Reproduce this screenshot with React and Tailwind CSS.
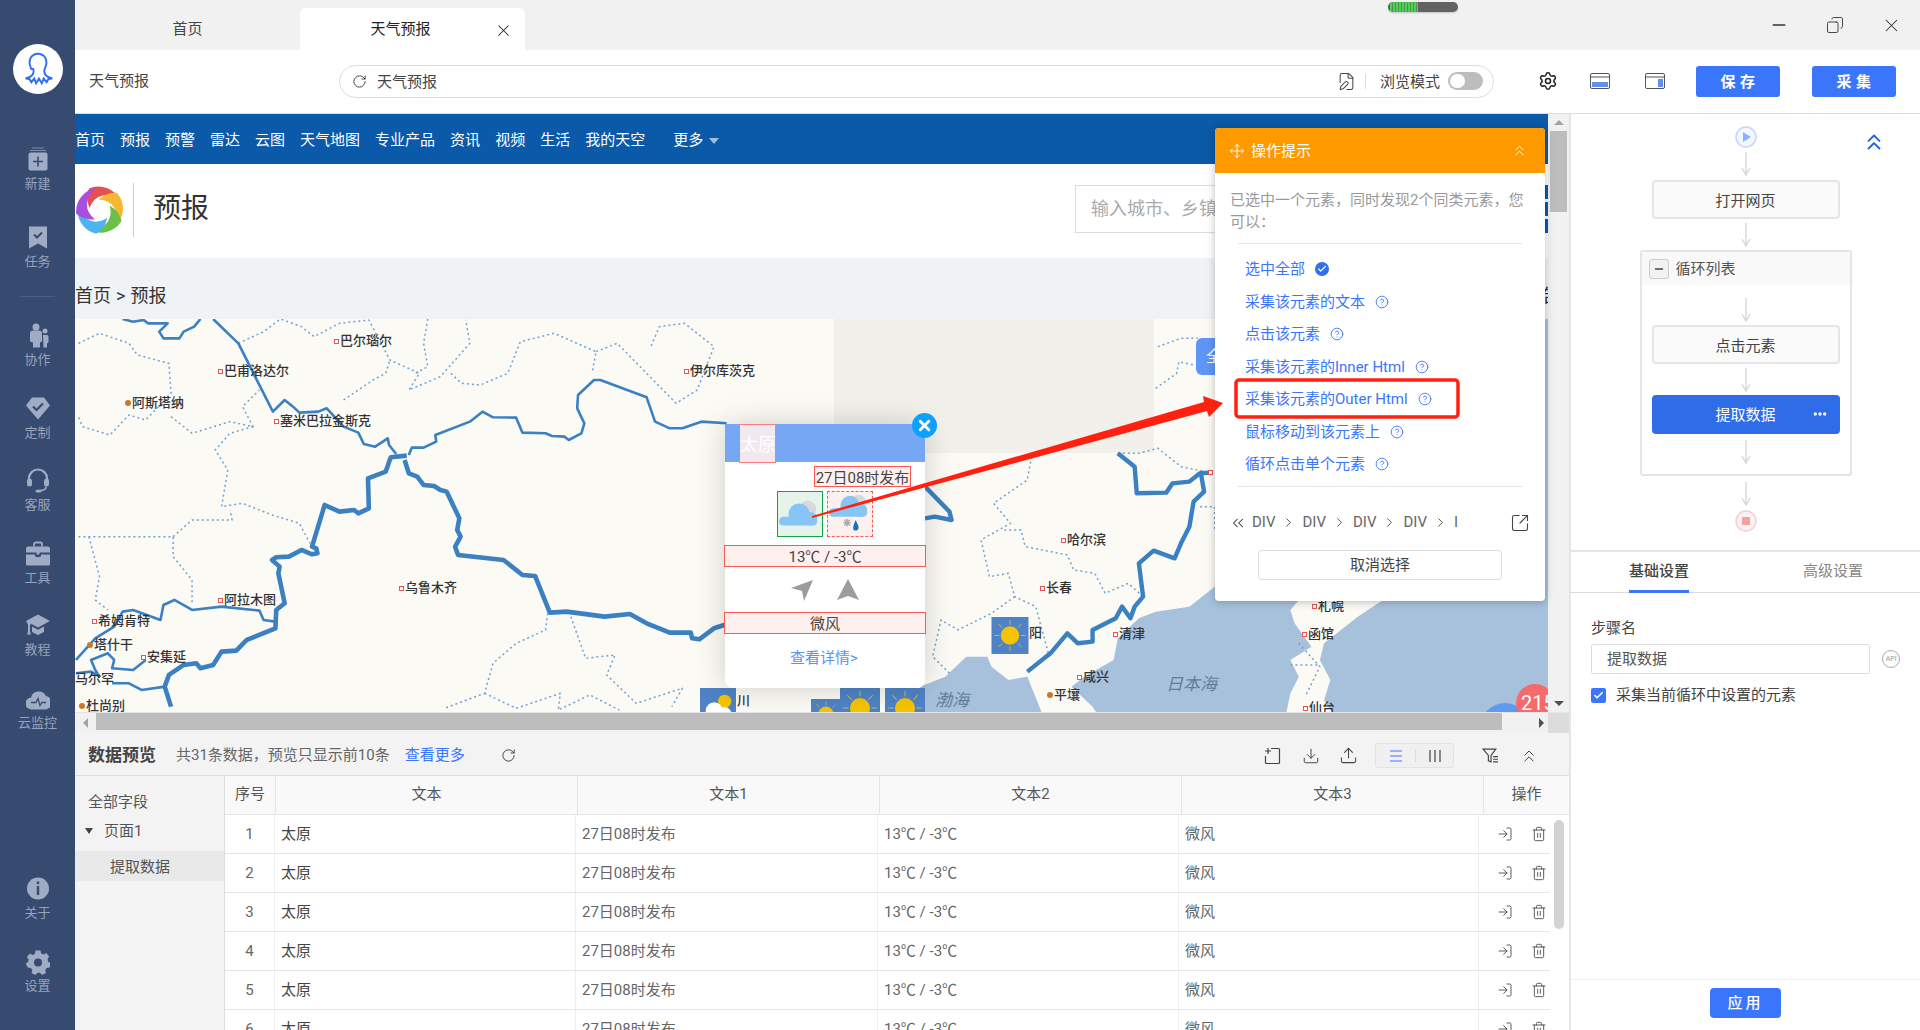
import {
  X, Minus, Copy, RotateCw, Settings, ChevronsUp, Move, Check, CircleHelp, SquareArrowOutUpRight,
  FilePen, Trash2, LogIn, Download, Upload, ChevronsLeft, ChevronRight, Ellipsis,
} from 'lucide-react'

const font = "font-['Roboto','Noto_Sans_CJK_SC',sans-serif]"

const navItems = ['首页', '预报', '预警', '雷达', '云图', '天气地图', '专业产品', '资讯', '视频', '生活', '我的天空']

const hints = [
  { text: '选中全部', checked: true },
  { text: '采集该元素的文本' },
  { text: '点击该元素' },
  { text: '采集该元素的Inner Html' },
  { text: '采集该元素的Outer Html' },
  { text: '鼠标移动到该元素上' },
  { text: '循环点击单个元素' },
]

// x / y are relative to the map, at the pin
const cities = [
  ['巴尔瑙尔', 262, 22, 'r'], ['巴甫洛达尔', 146, 52, 'r'], ['阿斯塔纳', 53, 84, 'o'],
  ['塞米巴拉金斯克', 202, 102, 'r'], ['伊尔库茨克', 612, 52, 'r'], ['乌鲁木齐', 327, 269, 'r'],
  ['阿拉木图', 146, 281, 'r'], ['希姆肯特', 20, 302, 'r'], ['塔什干', 15, 326, 'o'],
  ['安集延', 69, 338, 'r'], ['杜尚别', 7, 387, 'o'], ['哈尔滨', 989, 221, 'r'],
  ['长春', 968, 269, 'r'], ['清津', 1041, 315, 'r'], ['咸兴', 1005, 358, 'r'],
  ['平壤', 975, 376, 'o'], ['札幌', 1240, 287, 'r'], ['函馆', 1230, 315, 'r'], ['仙台', 1231, 389, 'r'],
]

const thickLines = [
  '240,1190 225,1130 235,1095 270,1065 300,1060 310,1075 340,1065 360,1025 395,1022 420,990 488,955 490,900 510,880 495,790 498,770 480,750 490,742 520,740 550,720 575,733 588,730 585,715 575,710 605,585 640,605 675,600 685,610 710,595 708,505 750,485 762,442 800,437',
  '795,450 805,490 825,500 840,525 865,528 880,540 895,545 925,625 920,660 928,680 915,710 922,735 1030,750 1075,795 1105,798 1140,908 1180,905 1270,920 1330,912 1370,940 1425,968 1475,968 1478,985 1495,988 1530,955 1568,940',
]
const thinLines = [
  '340,27 400,100 482,305 510,270 530,290 545,308 590,305 610,295 650,350 685,368 698,402 725,410 755,385 758,405 775,432',
  '805,435 812,413 840,413 870,395 868,375 950,335 980,305 1005,322 1060,323 1075,368 1130,370 1145,378 1175,380 1185,390 1215,370 1222,340 1205,295 1207,255 1245,210 1260,210 1370,262 1390,335 1425,355 1455,355 1500,335 1560,340',
  '125,27 150,35 175,30 185,40 232,40 212,65 222,85 260,85 270,65 295,50 310,27',
  '14,1050 60,985 105,950 125,905 150,900 215,930 222,885 248,870 290,900 360,890 450,902 460,930 488,935',
  '14,1090 50,1085 70,1100 60,1080 50,1050 90,1030 105,1050 100,1075 150,1080 180,1050',
  '100,1120 140,1120 170,1140 226,1130',
]
const dottedLines = [
  '400,100 460,65 500,27 550,50 580,80 640,40 710,30 760,150 830,190 805,240 880,200 950,100 940,30',
  '850,27 840,100 850,170 820,190',
  '905,190 930,220 975,225 1040,190 1070,95 1150,70 1250,125 1240,190',
  '1250,125 1300,100 1370,190 1440,280 1490,240 1530,110 1460,40 1400,50 1380,110',
  '20,100 70,70 140,100 160,135 235,160 240,250 180,330 140,315 95,375 30,350 20,320',
  '240,320 290,370 380,335 435,350 410,290 450,240',
  '650,270 720,210 750,190 760,150',
  '435,350 380,370 345,420 375,480 360,590 410,580 480,615 545,640 570,700',
  '20,680 245,680 245,740 290,810 290,880',
  '245,680 290,630 385,630 380,600',
  '45,680 70,800 60,870 90,900',
  '1135,910 1130,960 1060,1000 1005,1060 985,1150 890,1195',
  '1190,920 1225,1045 1295,1035 1275,1095 1345,1180 1455,1135 1430,1190',
  '985,1150 1060,1195 1165,1150 1160,1200 1235,1155 1305,1200',
]
const dottedLinesEast = [
  '265,440 255,510 175,580 215,640 145,690 165,800 210,790 225,860 275,890 305,1030',
  '200,660 240,660 250,710 350,735 365,780 415,790 440,850 495,820 530,860',
  '225,860 170,910 90,960 50,930 30,1040 70,1090',
  '470,430 520,430 565,415 620,470 690,488',
  '560,235 610,190 615,155 650,165',
  '565,110 620,85 660,85',
  '900,1000 950,1070 915,1160',
  '880,1065 945,1065',
  '665,590 700,590 700,660',
]
const thickEast = [
  '470,430 510,470 515,550 585,548 600,520 640,515 665,490 690,488',
  '668,495 675,545 650,575 640,650 620,700 605,745 555,722 520,760 530,860 510,890 500,925 480,890 465,925 410,960 410,995 375,1000 350,970 310,1030 255,1085',
  '12,530 70,605 75,630 35,620 12,625',
]

function Line({ points, width, color = '#3b80c0', dash }) {
  return (
    <polyline
      points={points}
      fill="none"
      stroke={color}
      strokeWidth={width}
      strokeDasharray={dash}
      strokeLinejoin="round"
      vectorEffect="non-scaling-stroke"
    />
  )
}

function SunTile({ className }) {
  return (
    <svg viewBox="0 0 38 38" className={className}>
      <rect width="38" height="38" fill="#4f83c6" />
      <circle cx="19" cy="19" r="9.5" fill="#f5c400" />
      <g stroke="#c9b65c" strokeWidth="1">
        <path d="M19 3v5M19 30v5M3 19h5M30 19h5M7 7l4 4M27 27l4 4M7 31l4-4M27 11l4-4" />
      </g>
    </svg>
  )
}

function CloudTile({ className }) {
  return (
    <svg viewBox="0 0 38 38" className={className}>
      <rect width="38" height="38" fill="#4f83c6" />
      <circle cx="26" cy="14" r="7" fill="#f5c400" />
      <circle cx="15" cy="24" r="9" fill="#fff" />
      <circle cx="26" cy="27" r="7" fill="#fff" />
      <rect x="6" y="26" width="28" height="12" fill="#fff" />
    </svg>
  )
}

function MapArea() {
  return (
    <div className="relative h-[393px] bg-[#fbfaf5] overflow-hidden">
      <svg viewBox="0 0 1474 393" className="absolute inset-0 w-[1474px] h-[393px]">
        <rect x="759" y="0" width="320" height="134" fill="#f1f0eb" />
        <g transform="translate(845 -9) scale(0.4209 0.3333)">
          <path
            fill="#a7c1dc"
            d="M700 830L640 890L560 905L520 925L470 985L460 1050L390 1100L360 1130L410 1190L420 1210L870 1210L880 1150L900 1100L880 1050L930 1010L890 940L880 900L900 870L1100 870L1040 920L960 1000L950 1050L975 1110L960 1170L980 1210L1495 1210L1495 27L1485 27L1485 830Z"
          />
          <path fill="#a7c1dc" d="M0 1210L0 1130L60 1100L110 1040L160 1040L170 1070L210 1110L255 1100L290 1210Z" />
          {dottedLinesEast.map((p) => <Line key={p} points={p} width={1.5} color="#6ba3d6" dash="2 3" />)}
          {thickEast.map((p) => <Line key={p} points={p} width={4.4} />)}
        </g>
        <g transform="translate(-5 -9) scale(0.4209 0.3333)">
          {dottedLines.map((p) => <Line key={p} points={p} width={1.5} color="#6ba3d6" dash="2 3" />)}
          {thinLines.map((p) => <Line key={p} points={p} width={2.6} />)}
          {thickLines.map((p) => <Line key={p} points={p} width={4.6} />)}
        </g>
      </svg>

      {cities.map(([name, x, y, kind]) => (
        <span
          key={name}
          className="absolute flex items-center gap-px -translate-y-1/2 text-[13px] leading-4 text-[#333] font-medium whitespace-nowrap"
          style={{ left: x - 3, top: y }}
        >
          <i className={kind === 'o' ? 'w-[6px] h-[6px] rounded-full bg-[#c9782c]' : 'w-[5px] h-[5px] bg-white border border-[#e2555c]'} />
          {name}
        </span>
      ))}
      <span className="absolute left-0 top-[352px] text-[13px] leading-4 text-[#333] font-medium">马尔罕</span>
      <span className="absolute left-[954px] top-[306px] text-[13px] leading-4 text-[#333] font-medium">阳</span>
      <i className="absolute left-[1133px] top-[151px] w-[5px] h-[5px] bg-white border border-[#e2555c]" />
      <span className="absolute left-[1091px] top-[355px] text-[17px] leading-5 italic text-[#5f7d9b]">日本海</span>
      <span className="absolute left-[860px] top-[371px] text-[17px] leading-5 italic text-[#5f7d9b]">渤海</span>

      <div className="absolute left-[1121px] top-[19px] w-[30px] h-[37px] rounded-l-md bg-[#5f96f5] text-white text-base leading-[37px] pl-[10px]">全</div>

      <SunTile className="absolute left-[916px] top-[298px] w-[38px] h-[37px]" />
      <CloudTile className="absolute left-[625px] top-[369px] w-[36px] h-[36px]" />
      <span className="absolute left-[662px] top-[370px] text-[13px] leading-6 font-medium text-[#333]">川</span>
      <SunTile className="absolute left-[731px] top-[380px] w-[40px] h-[30px]" />
      <SunTile className="absolute left-[765px] top-[369px] w-[40px] h-[40px]" />
      <SunTile className="absolute left-[810px] top-[369px] w-[40px] h-[40px]" />
      <div className="absolute left-[1405px] top-[384px] w-[50px] h-[50px] rounded-full bg-[#6199ee]" />
      <div className="absolute left-[1441px] top-[365px] w-[38px] h-[38px] rounded-full bg-[#f56a6a] text-white text-[20px] leading-[38px] pl-[5px] whitespace-nowrap">215</div>
    </div>
  )
}

function WeatherPopup() {
  return (
    <div className="absolute left-[650px] top-[311px] w-[200px] h-[263px] bg-white rounded-b-lg shadow-[0_0_30px_rgba(0,0,0,0.18)]">
      <div className="h-[38px] bg-[#75a7f5] pl-[14px]">
        <div className="w-[37px] h-[39px] -mt-px border border-[#ff7a7a] bg-[#fff0f0]/90 text-white text-[18px] leading-[39px] text-center whitespace-nowrap">太原</div>
      </div>
      <button className="absolute -right-[12px] -top-[12px] w-[25px] h-[25px] rounded-full bg-[#0fa0ff] text-white flex items-center justify-center">
        <X size={17} strokeWidth={4} />
      </button>
      <div className="flex justify-end pr-[14px] mt-[4px]">
        <div className="h-[21px] w-[97px] border border-[#f55] bg-[#fff0f0] text-[15px] leading-[22px] text-[#444] text-center whitespace-nowrap">27日08时发布</div>
      </div>
      <div className="flex justify-center gap-[4px] mt-[4px]">
        <div className="w-[46px] h-[46px] border border-[#0ea548] bg-[#e5f3ea]">
          <svg viewBox="0 0 46 46" className="w-full h-full">
            <circle cx="31" cy="18" r="9" fill="#d9d9d9" />
            <circle cx="22" cy="23" r="11" fill="#86c5f5" />
            <circle cx="34" cy="28" r="7" fill="#86c5f5" />
            <rect x="1" y="26" width="40" height="9" rx="4.5" fill="#86c5f5" />
          </svg>
        </div>
        <div className="w-[46px] h-[46px] border border-dashed border-[#f55] bg-[#fff0f0]">
          <svg viewBox="0 0 46 46" className="w-full h-full">
            <circle cx="32" cy="11" r="8" fill="#d9d9d9" />
            <circle cx="23" cy="14" r="10" fill="#86c5f5" />
            <circle cx="34" cy="19" r="7" fill="#86c5f5" />
            <rect x="1" y="17" width="40" height="9" rx="4.5" fill="#86c5f5" />
            <path d="M16 32h8M20 28v8M17 29l6 6M23 29l-6 6" stroke="#aaa" strokeWidth="1.4" />
            <path d="M27 40c2 1 5 0 5-3 0-2-2-5-3-8-1 3-4 8-2 11z" fill="#1c6fc0" />
          </svg>
        </div>
      </div>
      <div className="-mx-px mt-[8px] h-[22px] border border-[#f55] bg-[#fff0f0] text-[15px] leading-[22px] text-center text-[#444]">13℃ / -3℃</div>
      <div className="flex justify-center gap-[24px] mt-[12px] h-[25px]">
        <svg viewBox="0 0 22 22" className="w-[22px] h-[22px]"><path d="M0 9L22 1L13 22L11 12Z" fill="#9c9c9c" /></svg>
        <svg viewBox="0 0 22 22" className="w-[22px] h-[22px]"><path d="M11 0L22 21L11 17L0 21Z" fill="#9c9c9c" /></svg>
      </div>
      <div className="-mx-px mt-[8px] h-[22px] border border-[#f55] bg-[#fff0f0] text-[15px] leading-[22px] text-center text-[#444]">微风</div>
      <div className="mt-[14px] -ml-[2px] text-center text-[15px] leading-5 text-[#5a92ee]">查看详情&gt;</div>
    </div>
  )
}

function HintsPopup() {
  return (
    <div className="absolute left-[1140px] top-[14px] w-[330px] h-[473px] bg-white rounded-sm shadow-[0_1px_8px_rgba(0,0,0,0.25)] z-10">
      <div className="h-[45px] bg-[#ff9900] rounded-t-sm flex items-center pl-[14px] pr-[17px] text-white text-[15px]">
        <Move size={16} strokeWidth={1.4} className="mr-[6px]" />
        <span className="pt-[2px]">操作提示</span>
        <ChevronsUp size={17} strokeWidth={1.4} className="ml-auto" />
      </div>
      <p className="mt-[16px] mx-[15px] text-[15px] leading-[22px] text-[#999]">已选中一个元素，同时发现2个同类元素，您可以：</p>
      <div className="mx-[23px] mt-[10px] border-t border-[#e5e5e5]" />
      <ul className="mt-[9px] ml-[30px]">
        {hints.map((item) => (
          <li key={item.text} className="h-[32.5px] flex items-center gap-[10px] text-[15px] text-[#3a76fc]">
            {item.text}
            {item.checked ? (
              <span className="w-[14px] h-[14px] rounded-full bg-[#2f6ff0] text-white flex items-center justify-center">
                <Check size={10} strokeWidth={3} />
              </span>
            ) : (
              <CircleHelp size={14} strokeWidth={1.5} />
            )}
          </li>
        ))}
      </ul>
      <div className="mx-[23px] mt-[5px] border-t border-[#e5e5e5]" />
      <div className="mt-[24px] pl-[14px] pr-[15px] h-[24px] flex items-center text-[15px] text-[#666]">
        <ChevronsLeft size={18} strokeWidth={1.4} className="mr-[5px] text-[#333]" />
        {['DIV', 'DIV', 'DIV', 'DIV'].map((t, i) => (
          <span key={i} className="flex items-center">
            {t}
            <ChevronRight size={15} strokeWidth={1.5} className="mx-[6px] text-[#444]" />
          </span>
        ))}
        <span>I</span>
        <SquareArrowOutUpRight size={20} strokeWidth={1.3} className="ml-auto text-[#444]" />
      </div>
      <div className="mx-[43px] mt-[15px] h-[30px] border border-[#ddd] rounded-[4px] text-center text-[15px] leading-[28px] text-[#444]">取消选择</div>
    </div>
  )
}

function WebPage() {
  return (
    <div className="relative h-[619px] overflow-hidden">
      <div className="flex h-[598px]">
        <div className="w-[1474px] overflow-hidden">
          <div className="h-[50px] bg-[#0a5aa9] pt-[2px] flex items-center gap-[15px] text-[15px] text-white whitespace-nowrap">
            {navItems.map((n) => <span key={n}>{n}</span>)}
            <span className="ml-[13px] flex items-center gap-[6px]">
              更多
              <i className="w-0 h-0 border-x-[5px] border-x-transparent border-t-[6px] border-t-[#9fc0e0] mt-[2px]" />
            </span>
          </div>
          <div className="h-[94px] bg-white relative flex items-center">
            <svg viewBox="0 0 100 100" className="w-[50px] h-[52px] -mt-[2px]">
              {[['#e94f4f', 0], ['#f7b731', 72], ['#6cc04a', 144], ['#4db4f2', 216], ['#a84fe0', 288]].map(([c, r]) => (
                <path key={c} d="M28 7A48 48 0 0 1 90 30Q72 17 55 21Q37 25 29 46Q20 26 28 7Z" fill={c} transform={`rotate(${r} 50 50)`} />
              ))}
            </svg>
            <div className="w-px h-[54px] bg-[#ccc] ml-[8px] -mt-[2px]" />
            <span className="ml-[19px] -mt-[4px] text-[28px] text-[#333]">预报</span>
            <div className="absolute left-[1000px] top-[21px] w-[470px] h-[48px] border border-[#ddd] pl-[15px] text-[18px] leading-[46px] text-[#aaa]">输入城市、乡镇</div>
            <div className="absolute right-0 top-[21px] w-[5px] h-[48px] flex flex-col gap-[3px]">
              <i className="flex-1 bg-[#0a5aa9]" />
              <i className="flex-1 bg-[#0a5aa9]" />
              <i className="flex-1 bg-[#0a5aa9]" />
            </div>
          </div>
          <div className="h-[61px] bg-[#eff3f6] flex items-center justify-between pt-[14px] text-[18px] text-[#333] overflow-hidden">
            <span className="flex gap-[5px]"><span>首页</span><span>&gt;</span><span>预报</span></span>
            <span className="-mr-[12px]">告</span>
          </div>
          <MapArea />
        </div>
        <div className="w-[21px] bg-[#f1f1f1] flex flex-col items-center">
          <i className="mt-[6px] w-0 h-0 border-x-[5px] border-x-transparent border-b-[5px] border-b-[#a3a3a3]" />
          <div className="mt-[6px] w-[17px] h-[81px] bg-[#bdbdbd]" />
          <i className="mt-auto mb-[6px] w-0 h-0 border-x-[5px] border-x-transparent border-t-[5px] border-t-[#505050]" />
        </div>
      </div>
      <div className="h-[21px] flex bg-[#f1f1f1] border-t border-[#e5e5e5]">
        <div className="w-[21px] flex items-center justify-center">
          <i className="w-0 h-0 border-y-[5px] border-y-transparent border-r-[5px] border-r-[#a3a3a3]" />
        </div>
        <div className="w-[1407px] h-[17px] bg-[#bdbdbd]" />
        <div className="w-[46px] flex items-center justify-end pr-[4px]">
          <i className="w-0 h-0 border-y-[5px] border-y-transparent border-l-[5px] border-l-[#505050]" />
        </div>
        <div className="w-[21px] bg-[#dcdcdc]" />
      </div>
      <WeatherPopup />
      <HintsPopup />
    </div>
  )
}

function DataPreview() {
  const cols = ['文本', '文本1', '文本2', '文本3']
  return (
    <div className="flex-1 min-h-0 bg-[#f3f3f3] overflow-hidden">
      <div className="h-[43px] border-b border-[#dedede] flex items-center pl-[13px] pr-[30px] pt-[3px] text-[15px] text-[#666]">
        <strong className="text-[17px] font-bold text-[#444]">数据预览</strong>
        <span className="ml-[20px]">共31条数据，预览只显示前10条</span>
        <span className="ml-[15px] text-[#3a76fc]">查看更多</span>
        <RotateCw size={15} strokeWidth={1.6} className="ml-[36px] text-[#444]" />
        <svg viewBox="0 0 18 18" fill="none" stroke="#444" strokeWidth="1.2" className="ml-auto w-[18px] h-[18px]">
          <path d="M8 1.500h7.500a1 1 0 0 1 1 1v13a1 1 0 0 1-1 1H3.500a1 1 0 0 1-1-1V9M5 1v6M2 4h6" />
        </svg>
        <Download size={18} strokeWidth={1.3} className="ml-[21px] text-[#444]" />
        <Upload size={19} strokeWidth={1.3} className="ml-[19px] text-[#444]" />
        <div className="ml-[17px] w-[79px] h-[25px] rounded-[3px] border border-[#e2e2e2] bg-[#f0f0f0] flex items-center">
          <svg viewBox="0 0 14 14" className="ml-[13px] w-[14px] h-[14px]" stroke="#3a76fc" strokeWidth="1.1"><path d="M1 2h12M1 7h12M1 12h12" /></svg>
          <div className="ml-[12px] h-[12px] w-px bg-[#ddd]" />
          <svg viewBox="0 0 14 14" className="ml-[12px] w-[14px] h-[14px]" stroke="#444" strokeWidth="1.2"><path d="M2 1v12M7 1v12M12 1v12" /></svg>
        </div>
        <svg viewBox="0 0 16 16" fill="none" stroke="#444" strokeWidth="1.1" className="ml-[28px] w-[17px] h-[17px]">
          <path d="M1 2h12L8.500 8v6L6 13V8L1 2zM10.500 9H15M10.500 11.500H15M10.500 14H15" />
        </svg>
        <ChevronsUp size={20} strokeWidth={1.2} className="ml-[20px] text-[#444]" />
      </div>
      <div className="flex">
        <div className="w-[150px] shrink-0 border-r border-[#dedede] h-[260px]">
          <div className="pl-[13px] pt-[16px] text-[15px] leading-5 text-[#555]">全部字段</div>
          <div className="pl-[10px] mt-[9px] flex items-center text-[15px] leading-5 text-[#555]">
            <i className="w-0 h-0 border-x-[4px] border-x-transparent border-t-[6px] border-t-[#444]" />
            <span className="ml-[11px]">页面1</span>
          </div>
          <div className="mt-[10px] h-[30px] bg-[#e9e9e9] pl-[35px] text-[15px] leading-[32px] text-[#555]">提取数据</div>
        </div>
        <div className="flex-1 min-w-0 bg-white relative">
          <div className="flex h-[39px] bg-[#f9f9f9] border-b border-[#e6e6e6] text-[15px] leading-[36px] text-[#555] text-center">
            <div className="w-[51px] border-r border-[#e6e6e6]">序号</div>
            {cols.map((c) => <div key={c} className="w-[302px] border-r border-[#e6e6e6]">{c}</div>)}
            <div className="flex-1">操作</div>
          </div>
          {[1, 2, 3, 4, 5, 6].map((n) => (
            <div key={n} className="flex h-[39px] w-[1325px] border-b border-[#e6e6e6] text-[15px] leading-[38px] text-[#666]">
              <div className="w-[50px] border-r border-[#eee] text-center">{n}</div>
              <div className="w-[301px] border-r border-[#eee] pl-[6px] text-[#444]">太原</div>
              <div className="w-[302px] border-r border-[#eee] pl-[6px]">27日08时发布</div>
              <div className="w-[301px] border-r border-[#eee] pl-[6px]">13℃ / -3℃</div>
              <div className="w-[300px] border-r border-[#eee] pl-[6px]">微风</div>
              <div className="flex-1 flex items-center pl-[18px] gap-[18px] text-[#444]">
                <LogIn size={16} strokeWidth={1.3} />
                <Trash2 size={16} strokeWidth={1.3} />
              </div>
            </div>
          ))}
          <div className="absolute right-[5px] top-[44px] w-[10px] h-[109px] rounded-full bg-[#d3d3d3]" />
        </div>
      </div>
    </div>
  )
}

function Arrow() {
  return (
    <div className="flex justify-center">
      <svg viewBox="0 0 12 26" className="w-[12px] h-[26px]" fill="none" stroke="#d8d8d8" strokeWidth="1.4">
        <path d="M6 1v23M2 17l4 7 4-7" />
      </svg>
    </div>
  )
}

function StepBox({ children }) {
  return (
    <div className="mx-auto w-[188px] h-[39px] rounded-[4px] border-2 border-[#e5e5e5] bg-[#fafafa] text-center text-[15px] leading-[38px] text-[#444]">{children}</div>
  )
}

function FlowPanel() {
  return (
    <div className="relative h-[436px] pt-[12px]">
      <div className="flex justify-center">
        <svg viewBox="0 0 22 22" className="w-[22px] h-[22px]">
          <circle cx="11" cy="11" r="10" fill="#f2f6ff" stroke="#c4d6fb" strokeWidth="1.5" />
          <path d="M8 6l8 5-8 5z" fill="#8fb0fa" />
        </svg>
      </div>
      <div className="mt-[3px]"><Arrow /></div>
      <div className="mt-[3px]"><StepBox>打开网页</StepBox></div>
      <div className="mt-[3px]"><Arrow /></div>
      <div className="mt-[2px] mx-auto w-[212px] h-[226px] border-2 border-[#e5e5e5] rounded-[3px]">
        <div className="h-[33px] bg-[#f9f9f9] flex items-center pl-[7px] text-[15px] text-[#555]">
          <span className="w-[20px] h-[20px] rounded-[3px] border border-[#ccc] bg-[#f2f2f2] flex items-center justify-center">
            <Minus size={12} strokeWidth={3} className="text-[#444]" />
          </span>
          <span className="ml-[7px] pt-[1px]">循环列表</span>
        </div>
        <div className="mt-[12px]"><Arrow /></div>
        <div className="mt-[2px]"><StepBox>点击元素</StepBox></div>
        <div className="mt-[3px]"><Arrow /></div>
        <div className="mt-[2px] relative mx-auto w-[188px] h-[39px] rounded-[4px] bg-[#2f6de8] text-center text-[15px] leading-[41px] text-white">
          提取数据
          <Ellipsis size={16} strokeWidth={3} className="absolute right-[12px] top-[11px]" />
        </div>
        <div className="mt-[5px]"><Arrow /></div>
      </div>
      <div className="mt-[5px]"><Arrow /></div>
      <div className="mt-[3px] flex justify-center">
        <svg viewBox="0 0 22 22" className="w-[22px] h-[22px]">
          <circle cx="11" cy="11" r="10" fill="#fdf1f1" stroke="#f6cfcf" strokeWidth="1.5" />
          <rect x="7" y="7" width="8" height="8" rx="1" fill="#f2a0a0" />
        </svg>
      </div>
      <ChevronsUp size={26} strokeWidth={1.8} className="absolute left-[290px] top-[15px] text-[#1f66e0]" />
    </div>
  )
}

function SettingsPanel() {
  return (
    <div className="flex-1 flex flex-col border-t-2 border-[#e5e5e5]">
      <div className="h-[41px] border-b border-[#ddd] flex text-[15px] leading-[39px]">
        <span className="ml-[58px] w-[60px] h-[41px] border-b-[3px] border-[#3a76fc] font-medium text-[#444] whitespace-nowrap">基础设置</span>
        <span className="ml-[114px] text-[#888]">高级设置</span>
      </div>
      <div className="flex-1 px-[20px]">
        <div className="mt-[25px] text-[15px] leading-5 text-[#444]">步骤名</div>
        <div className="mt-[6px] flex items-center">
          <div className="w-[284px] h-[30px] rounded-[2px] border border-[#ddd] pl-[15px] text-[15px] leading-[28px] text-[#555]">提取数据</div>
          <span className="ml-[12px] w-[18px] h-[18px] rounded-full border border-[#aaa] text-[7px] leading-[16px] text-center text-[#999]">API</span>
        </div>
        <label className="mt-[11px] flex items-center text-[15px] leading-5 text-[#444]">
          <span className="w-[15px] h-[15px] rounded-[2px] bg-[#3a76fc] text-white flex items-center justify-center">
            <Check size={11} strokeWidth={3.5} />
          </span>
          <span className="ml-[10px]">采集当前循环中设置的元素</span>
        </label>
      </div>
      <div className="h-[51px] border-t border-[#eee] flex justify-center pt-[8px]">
        <button className="w-[71px] h-[30px] rounded-[4px] bg-[#3a76fc] text-white text-[15px] font-medium tracking-[0.2em]">应用</button>
      </div>
    </div>
  )
}

const sideTop = [
  {
    label: '新建',
    icon: (
      <>
        <path d="M6 1h12v1H6zM4 3.5h16v1H4z" opacity=".7" />
        <rect x="2.5" y="6" width="19" height="18" rx="2" />
        <path d="M12 10v10M7 15h10" stroke="#374a70" strokeWidth="1.6" />
      </>
    ),
  },
  {
    label: '任务',
    icon: (
      <>
        <path d="M3 2h18v22l-9-5-9 5z" />
        <path d="M8 10l3 3 5-5" fill="none" stroke="#374a70" strokeWidth="2" />
      </>
    ),
  },
]
const sideMid = [
  {
    label: '协作',
    icon: (
      <>
        <circle cx="10" cy="4.5" r="3.5" />
        <path d="M4 10.5c0-1.5 1-2.5 3-2.5h6c2 0 3 1 3 2.5V19l-2 1v5H7v-5l-3-1z" />
        <circle cx="19" cy="8.5" r="2.5" />
        <path d="M17 12.5h4c1 0 1.5.7 1.5 2V20L21 21v4h-3.5z" />
      </>
    ),
  },
  {
    label: '定制',
    icon: (
      <>
        <path d="M6 2h12l6 8-12 14L0 10z" />
        <path d="M7 11l3.5 3.5L17 8" fill="none" stroke="#374a70" strokeWidth="2.2" />
      </>
    ),
  },
  {
    label: '客服',
    icon: (
      <>
        <path d="M3 13V11a9 9 0 0 1 18 0v2" fill="none" stroke="#a0abc4" strokeWidth="2.2" />
        <rect x="1" y="11" width="5" height="8" rx="2.5" />
        <rect x="18" y="11" width="5" height="8" rx="2.5" />
        <path d="M20 19c0 3-3 4-6 4" fill="none" stroke="#a0abc4" strokeWidth="1.6" />
        <ellipse cx="12.5" cy="23.5" rx="3" ry="1.5" />
      </>
    ),
  },
  {
    label: '工具',
    icon: (
      <>
        <path d="M8 6V3.5C8 2.5 9 2 10 2h4c1 0 2 .5 2 1.500V6" fill="none" stroke="#a0abc4" strokeWidth="1.8" />
        <path d="M0 8c0-1 1-2 2-2h20c1 0 2 1 2 2v4H0z" />
        <path d="M0 14h9v1.500c0 1.500 6 1.500 6 0V14h9v10c0 .5-1 1-2 1H2c-1 0-2-.5-2-1z" />
        <rect x="10.500" y="11" width="3" height="3" />
      </>
    ),
  },
  {
    label: '教程',
    icon: (
      <>
        <path d="M12 2L24 8.500 12 15 5 11.300 4 13v6l1 3H1l1-3v-7L0 8.500z" />
        <path d="M6 14l6 3.300 6-3.300v5.500L12 22.500 6 19.500z" />
      </>
    ),
  },
  {
    label: '云监控',
    icon: (
      <>
        <path d="M6 24a6 6 0 0 1-1-12 8 8 0 0 1 15-1.500 6.800 6.800 0 0 1-1 13.500z" />
        <path d="M5 17h5l2-4 2 7 2-3h4" fill="none" stroke="#374a70" strokeWidth="1.3" />
      </>
    ),
  },
]
const sideBottom = [
  {
    label: '关于',
    icon: (
      <>
        <circle cx="12" cy="13" r="11" />
        <rect x="10.800" y="6" width="2.400" height="2.600" fill="#374a70" />
        <rect x="10.800" y="10.500" width="2.400" height="9" fill="#374a70" />
      </>
    ),
  },
  {
    label: '设置',
    icon: (
      <>
        <path d="M9.500 2h5l.7 3 2.300 1 2.700-1.500 3 3.500-1.700 2.500.5 2.500 2.500 1.500-.8 4.500-3 .5-1.500 2 .8 3-4 2-2-2.300h-2.500l-2 2.300-4-2 .8-3-1.500-2-3-.5L-.4 15l2.500-1.500.5-2.500L.9 8.500l3-3.500 2.700 1.500L8.900 5.500z" />
        <circle cx="12" cy="14" r="4" fill="#374a70" />
      </>
    ),
  },
]

function SideItem({ item }) {
  return (
    <div className="flex flex-col items-center h-[48px]">
      <svg viewBox="0 0 24 26" fill="#a0abc4" className="w-[24px] h-[27px]">{item.icon}</svg>
      <span className="mt-[2px] text-[13px] leading-[18px] text-[#97a3bd] whitespace-nowrap">{item.label}</span>
    </div>
  )
}

function Sidebar() {
  return (
    <aside className="w-[75px] shrink-0 bg-[#374a70] flex flex-col items-stretch pt-[44px] pb-[34px]">
      <div className="mx-auto w-[50px] h-[50px] rounded-full bg-white flex items-center justify-center">
        <svg viewBox="0 0 40 40" fill="none" stroke="#2f6ff0" strokeWidth="2" className="w-[38px] h-[38px]">
          <path d="M13 20C8 10 14 4 20 4s12 6 7 16c-1 3 0 6 3 8l5 2-4 .5-2 3.500-3-4-2 5-3-5-3 5-2-5-3 4-2-3.500-4-.5 5-2c3-2 4-5 3-8z" />
        </svg>
      </div>
      <div className="mt-[52px] flex flex-col gap-[30px]">
        {sideTop.map((i) => <SideItem key={i.label} item={i} />)}
      </div>
      <div className="mx-[20px] mt-[24px] h-px bg-[#4d5f84]" />
      <div className="mt-[25px] flex flex-col gap-[24.500px]">
        {sideMid.map((i) => <SideItem key={i.label} item={i} />)}
      </div>
      <div className="mt-auto flex flex-col gap-[25px]">
        {sideBottom.map((i) => <SideItem key={i.label} item={i} />)}
      </div>
    </aside>
  )
}

function Header() {
  return (
    <>
      <div className="relative h-[50px] bg-[#f1f1f1] flex items-end text-[15px]">
        <div className="w-[225px] h-[42px] text-center leading-[42px] text-[#444]">首页</div>
        <div className="relative w-[225px] h-[42px] bg-white rounded-t-md pr-[24px] text-center leading-[42px] text-[#222]">
          天气预报
          <X size={19} strokeWidth={1.3} className="absolute right-[12px] top-[13px] text-[#222]" />
        </div>
        <div className="absolute left-[1313px] top-[2px] w-[70px] h-[10px] rounded-full bg-[#626262] overflow-hidden pl-[2px] shadow-[0_1px_2px_rgba(0,0,0,0.2)]">
          <div className="w-[28px] h-full bg-[repeating-linear-gradient(90deg,#48d04f_0,#48d04f_2px,#5b8f5e_2px,#5b8f5e_3px)]" />
        </div>
        <div className="ml-auto self-center flex items-center gap-[37px] pr-[18px] text-[#333]">
          <Minus size={20} strokeWidth={1.6} />
          <Copy size={18} strokeWidth={1.2} className="-scale-x-100" />
          <X size={21} strokeWidth={1.2} />
        </div>
      </div>
      <div className="h-[64px] bg-white border-b border-[#ddd] flex items-center pb-[1px]">
        <span className="ml-[14px] w-[250px] pt-[1px] text-[15px] text-[#444]">天气预报</span>
        <div className="w-[1155px] h-[33px] rounded-full border border-[#ddd] flex items-center pl-[12px] pr-[10px] text-[15px] leading-[33px] text-[#444]">
          <RotateCw size={15} strokeWidth={1.6} className="text-[#444]" />
          <span className="ml-[10px] pt-[2px]">天气预报</span>
          <FilePen size={19} strokeWidth={1.3} className="ml-auto text-[#444]" />
          <i className="ml-[9px] w-px h-[15px] bg-[#ddd]" />
          <span className="ml-[14px] pt-[2px]">浏览模式</span>
          <span className="ml-[8px] w-[35px] h-[18px] rounded-full bg-[#bdbdbd] p-[2px]">
            <i className="block w-[15px] h-[14px] rounded-full bg-white" />
          </span>
        </div>
        <Settings size={20} strokeWidth={1.8} className="ml-[44px] text-[#222]" />
        <svg viewBox="0 0 20 16" className="ml-[32px] w-[20px] h-[16px]" fill="none">
          <rect x=".5" y=".5" width="19" height="15" rx="1.500" stroke="#555" />
          <path d="M.5 4h19" stroke="#555" />
          <rect x="2" y="9" width="16" height="5" fill="#5d8ff5" />
        </svg>
        <svg viewBox="0 0 20 16" className="ml-[35px] w-[20px] h-[16px]" fill="none">
          <rect x=".5" y=".5" width="19" height="15" rx="1.500" stroke="#555" />
          <path d="M.5 4h19" stroke="#555" />
          <rect x="13" y="6" width="5" height="8" fill="#5d8ff5" />
        </svg>
        <button className="ml-[31px] w-[84px] h-[31px] rounded-[3px] bg-[#3a76fc] pt-[2px] pl-[4px] text-white text-[15px] font-bold tracking-[0.3em]">保存</button>
        <button className="ml-[32px] w-[84px] h-[31px] rounded-[3px] bg-[#3a76fc] pt-[2px] pl-[4px] text-white text-[15px] font-bold tracking-[0.3em]">采集</button>
      </div>
    </>
  )
}

export default function App() {
  return (
    <div className={`relative flex w-[1920px] h-[1030px] overflow-hidden bg-white ${font}`}>
      <Sidebar />
      <div className="flex-1 min-w-0 flex flex-col">
        <Header />
        <div className="flex-1 min-h-0 flex">
          <div className="w-[1496px] flex flex-col border-r-2 border-[#e5e5e5]">
            <WebPage />
            <DataPreview />
          </div>
          <div className="flex-1 min-w-0 flex flex-col">
            <FlowPanel />
            <SettingsPanel />
          </div>
        </div>
      </div>
      {/* annotation drawn on top of the screenshot */}
      <svg viewBox="0 0 1920 1030" className="absolute inset-0 w-[1920px] h-[1030px] pointer-events-none z-20">
        <polygon points="812,516 1204,402 1203,396 1223,403 1209,417 1207,411 812,518" fill="#ff2010" />
        <rect x="1236" y="380" width="222" height="37" rx="3" fill="none" stroke="#ff2010" strokeWidth="3.5" />
      </svg>
    </div>
  )
}
